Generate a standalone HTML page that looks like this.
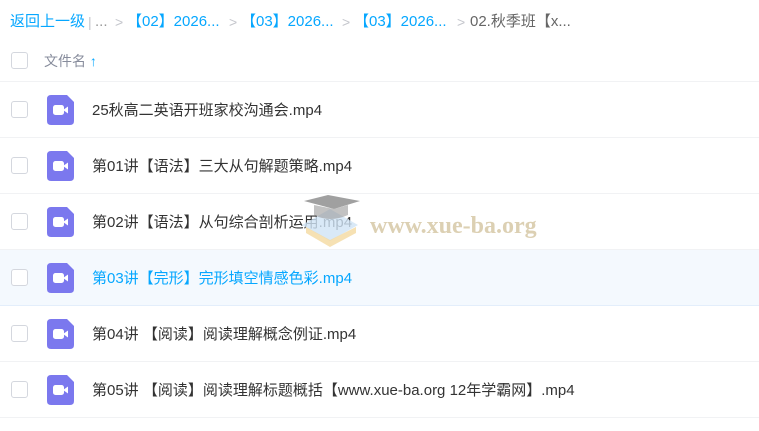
<!DOCTYPE html>
<html><head><meta charset="utf-8"><style>
*{margin:0;padding:0;box-sizing:border-box}
body{width:759px;height:431px;background:#fff;font-family:"Liberation Sans","Noto Sans CJK SC",sans-serif;position:relative;overflow:hidden}
.bc span{position:absolute;top:12px;height:20px;line-height:20px;font-size:15px;color:#06a7ff;white-space:nowrap}
.bc .g{color:#c4c6cc;font-size:14px}
.bc .d{color:#666}
.hdr{position:absolute;left:0;top:40px;width:759px;height:42px;border-bottom:1px solid #f1f2f4}
.cb{position:absolute;left:11px;width:17px;height:17px;border:1px solid #d4d7de;border-radius:3px;background:#fff}
.hdr .t{position:absolute;left:44px;top:11px;font-size:14px;color:#878c9c}
.row{position:absolute;left:0;width:759px;height:56px;border-bottom:1px solid #f1f2f4}
.row .n{position:absolute;left:92px;top:17px;font-size:15px;color:#333}
.row.h{background:#f4f9fe;border-bottom-color:#e3eefb}
.row.h .n{color:#06a7ff}
.ic{position:absolute;left:47px;top:13px}
</style></head><body>
<div class="bc"><span style="left:10px">返回上一级</span><span class="g" style="left:88px">|</span><span style="left:95px;color:#999">...</span><span class="g" style="left:115px">&gt;</span><span style="left:127px">【02】2026...</span><span class="g" style="left:229px">&gt;</span><span style="left:241px">【03】2026...</span><span class="g" style="left:342px">&gt;</span><span style="left:354px">【03】2026...</span><span class="g" style="left:457px">&gt;</span><span class="d" style="left:470px">02.秋季班【x...</span></div>
<div class="hdr"><div class="cb" style="top:12px"></div><div class="t">文件名 <span style="color:#06a7ff;font-weight:bold">↑</span></div></div>

<div class="row" style="top:82px"><div class="cb" style="top:19px"></div><svg class="ic" width="27" height="30" viewBox="0 0 27 30"><path d="M4 0H20L27 7V26Q27 30 23 30H4Q0 30 0 26V4Q0 0 4 0Z" fill="#7b78ee"/><rect x="6" y="10" width="11" height="10" rx="2.5" fill="#fff"/><path d="M16 15L21 11.5V18.5Z" fill="#fff"/></svg><div class="n">25秋高二英语开班家校沟通会.mp4</div></div>
<div class="row" style="top:138px"><div class="cb" style="top:19px"></div><svg class="ic" width="27" height="30" viewBox="0 0 27 30"><path d="M4 0H20L27 7V26Q27 30 23 30H4Q0 30 0 26V4Q0 0 4 0Z" fill="#7b78ee"/><rect x="6" y="10" width="11" height="10" rx="2.5" fill="#fff"/><path d="M16 15L21 11.5V18.5Z" fill="#fff"/></svg><div class="n">第01讲【语法】三大从句解题策略.mp4</div></div>
<div class="row" style="top:194px"><div class="cb" style="top:19px"></div><svg class="ic" width="27" height="30" viewBox="0 0 27 30"><path d="M4 0H20L27 7V26Q27 30 23 30H4Q0 30 0 26V4Q0 0 4 0Z" fill="#7b78ee"/><rect x="6" y="10" width="11" height="10" rx="2.5" fill="#fff"/><path d="M16 15L21 11.5V18.5Z" fill="#fff"/></svg><div class="n">第02讲【语法】从句综合剖析运用.mp4</div></div>
<div class="row h" style="top:250px"><div class="cb" style="top:19px"></div><svg class="ic" width="27" height="30" viewBox="0 0 27 30"><path d="M4 0H20L27 7V26Q27 30 23 30H4Q0 30 0 26V4Q0 0 4 0Z" fill="#7b78ee"/><rect x="6" y="10" width="11" height="10" rx="2.5" fill="#fff"/><path d="M16 15L21 11.5V18.5Z" fill="#fff"/></svg><div class="n">第03讲【完形】完形填空情感色彩.mp4</div></div>
<div class="row" style="top:306px"><div class="cb" style="top:19px"></div><svg class="ic" width="27" height="30" viewBox="0 0 27 30"><path d="M4 0H20L27 7V26Q27 30 23 30H4Q0 30 0 26V4Q0 0 4 0Z" fill="#7b78ee"/><rect x="6" y="10" width="11" height="10" rx="2.5" fill="#fff"/><path d="M16 15L21 11.5V18.5Z" fill="#fff"/></svg><div class="n">第04讲 【阅读】阅读理解概念例证.mp4</div></div>
<div class="row" style="top:362px"><div class="cb" style="top:19px"></div><svg class="ic" width="27" height="30" viewBox="0 0 27 30"><path d="M4 0H20L27 7V26Q27 30 23 30H4Q0 30 0 26V4Q0 0 4 0Z" fill="#7b78ee"/><rect x="6" y="10" width="11" height="10" rx="2.5" fill="#fff"/><path d="M16 15L21 11.5V18.5Z" fill="#fff"/></svg><div class="n">第05讲 【阅读】阅读理解标题概括【www.xue-ba.org 12年学霸网】.mp4</div></div>

<svg style="position:absolute;left:300px;top:195px" width="62" height="60" viewBox="0 0 62 60"><path d="M2 30L30 14L58 30L30 46Z" fill="#cfe3f5" opacity=".8"/><path d="M6 32L30 45L56 32L56 38L30 52L6 38Z" fill="#f4d9a0" opacity=".8"/><path d="M4 6L28 0L60 6L34 14Z" fill="#888" opacity=".8"/><path d="M14 10V20Q30 28 48 20V10L34 14Z" fill="#999" opacity=".6"/></svg>
<div style="position:absolute;left:370px;top:213px;font-family:'Liberation Serif',serif;font-weight:bold;font-size:24px;color:#d9cbab;opacity:.9">www.xue-ba.org</div>
</body></html>
